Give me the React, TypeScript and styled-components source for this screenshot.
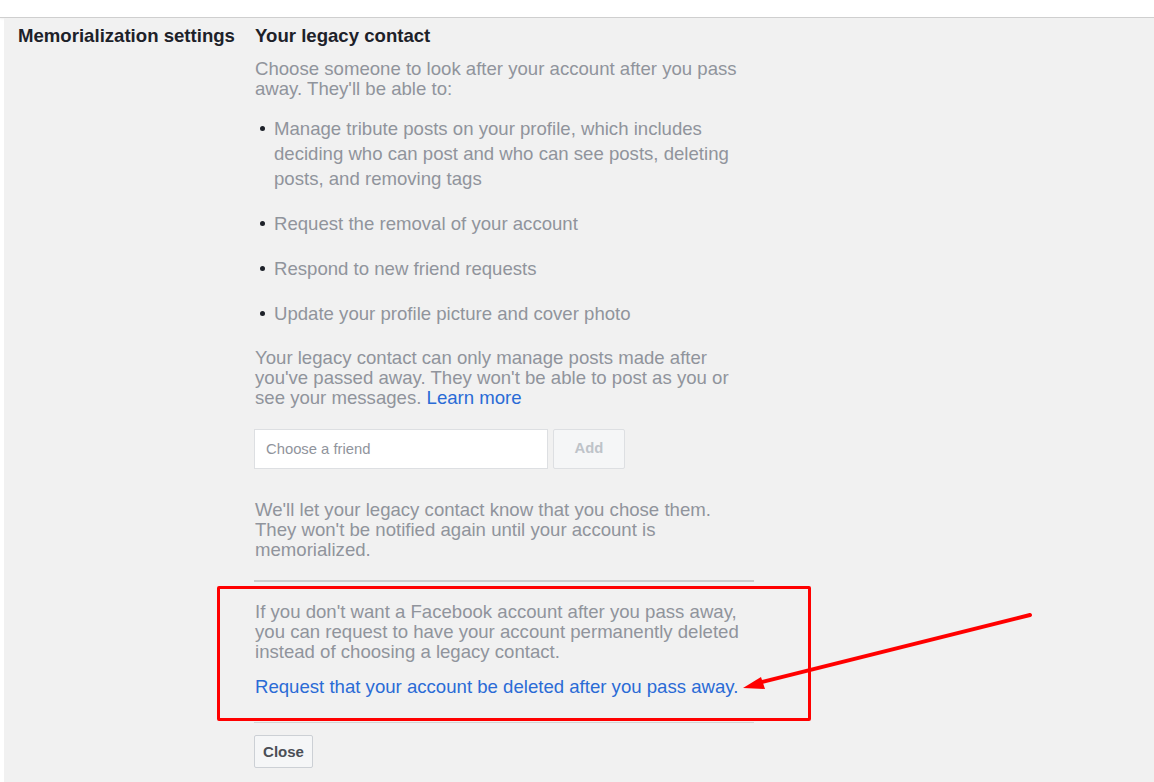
import React from "react";
import styled, { createGlobalStyle } from "styled-components";

const Global = createGlobalStyle`
  html, body { margin: 0; padding: 0; background: #ffffff; }
  body { font-family: "Liberation Sans", Arial, Helvetica, sans-serif; }
  * { box-sizing: border-box; }
`;

const TopBar = styled.div`
  height: 18px;
  background: #ffffff;
  border-bottom: 1px solid #cfcfcf;
  box-shadow: 0 1px 2px rgba(0, 0, 0, 0.06);
`;

const Panel = styled.div`
  margin-left: 4px;
  min-height: 764px;
  background: #f1f1f1;
  display: grid;
  grid-template-columns: 236px 500px;
  padding: 8px 0 12px 14px;
`;

const Label = styled.div`
  font-size: 18.6px;
  line-height: 20px;
  font-weight: bold;
  color: #1d2129;
`;

const Content = styled.div`
  display: flex;
  flex-direction: column;
`;

const Heading = styled.div`
  font-size: 18.6px;
  line-height: 20px;
  font-weight: bold;
  color: #1d2129;
  padding-left: 1px;
`;

const Para = styled.p<{ $top: number }>`
  margin: ${(p) => p.$top}px 0 0;
  padding-left: 1px;
  font-size: 18.6px;
  line-height: 20px;
  color: #90949c;
`;

const Link = styled.a`
  color: #2a6bd6;
  text-decoration: none;
`;

const List = styled.ul`
  list-style: none;
  margin: 17px 0 0;
  padding: 0;
  display: flex;
  flex-direction: column;
  gap: 20px;
`;

const Item = styled.li`
  display: flex;
  font-size: 18.6px;
  line-height: 25px;
  color: #90949c;
  padding-right: 8px;
`;

const Dot = styled.span`
  flex: none;
  width: 5px;
  height: 5px;
  border-radius: 50%;
  background: #1d2129;
  margin: 10px 9px 0 6px;
`;

const FriendRow = styled.div`
  display: flex;
  gap: 5px;
  margin-top: 21px;
`;

const FriendInput = styled.div`
  width: 294px;
  height: 40px;
  background: #ffffff;
  border: 1px solid #dddfe2;
  display: flex;
  align-items: center;
  padding-left: 11px;
  font-size: 14.8px;
  color: #90949c;
`;

const AddButton = styled.div`
  width: 72px;
  height: 40px;
  background: #f5f6f7;
  border: 1px solid #dddfe2;
  border-radius: 2px;
  display: flex;
  align-items: center;
  justify-content: center;
  font-size: 14.8px;
  font-weight: bold;
  color: #bec3c9;
  padding-bottom: 2px;
`;

const DeleteSection = styled.div`
  position: relative;
  margin-top: 20px;
  border-top: 2px solid #cbcbcb;
  border-bottom: 1px solid #d4d4d4;
  padding: 20px 0 25px;
`;

const DeleteLink = styled(Link)`
  display: block;
  margin-top: 15px;
  padding-left: 1px;
  font-size: 18.6px;
  line-height: 20px;
`;

const Highlight = styled.div`
  position: absolute;
  top: 4px;
  bottom: 1px;
  left: -37px;
  right: -57px;
  border: 3px solid #ff0000;
  border-radius: 2px;
  pointer-events: none;
`;

const Arrow = styled.svg`
  position: absolute;
  left: 486px;
  top: 28px;
  overflow: visible;
  pointer-events: none;
`;

const CloseButton = styled.div`
  margin-top: 12px;
  width: 59px;
  height: 33px;
  background: #f5f6f7;
  border: 1px solid #ccd0d5;
  border-radius: 2px;
  display: flex;
  align-items: center;
  justify-content: center;
  font-size: 15px;
  font-weight: bold;
  color: #4b4f56;
`;

const items = [
  "Manage tribute posts on your profile, which includes deciding who can post and who can see posts, deleting posts, and removing tags",
  "Request the removal of your account",
  "Respond to new friend requests",
  "Update your profile picture and cover photo",
];

export default function App() {
  return (
    <>
      <Global />
      <TopBar />
      <Panel>
        <Label>Memorialization settings</Label>
        <Content>
          <Heading>Your legacy contact</Heading>
          <Para $top={13}>
            Choose someone to look after your account after you pass away. They'll be able to:
          </Para>
          <List>
            {items.map((t) => (
              <Item key={t}>
                <Dot />
                <span>{t}</span>
              </Item>
            ))}
          </List>
          <Para $top={22}>
            Your legacy contact can only manage posts made after you've passed away. They won't be
            able to post as you or see your messages. <Link href="#">Learn more</Link>
          </Para>
          <FriendRow>
            <FriendInput>Choose a friend</FriendInput>
            <AddButton>Add</AddButton>
          </FriendRow>
          <Para $top={31}>
            We'll let your legacy contact know that you chose them. They won't be notified again
            until your account is memorialized.
          </Para>
          <DeleteSection>
            <Para $top={0}>
              If you don't want a Facebook account after you pass away, you can request to have your
              account permanently deleted instead of choosing a legacy contact.
            </Para>
            <DeleteLink href="#">Request that your account be deleted after you pass away.</DeleteLink>
            <Highlight />
            <Arrow width="295" height="82" viewBox="0 0 295 82">
              <line x1="290" y1="5" x2="18" y2="73" stroke="#ff0000" strokeWidth="4" strokeLinecap="round" />
              <polygon points="3,78 21,67 25,79" fill="#ff0000" />
            </Arrow>
          </DeleteSection>
          <CloseButton>Close</CloseButton>
        </Content>
      </Panel>
    </>
  );
}
